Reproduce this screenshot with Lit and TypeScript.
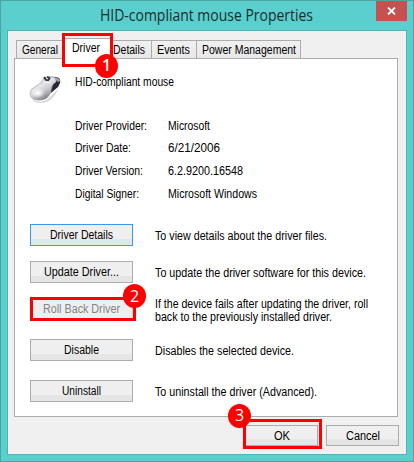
import { LitElement, html, css, svg } from "lit";
import { customElement, property } from "lit/decorators.js";

/** A single line of UI text fitted to an exact advance width. */
@customElement("ui-label")
class UiLabel extends LitElement {
  @property() text = "";
  @property({ type: Number }) width = 50;
  static styles = css`
    :host { display: block; height: 16px; flex: none; color: #000; }
    svg { display: block; overflow: visible; }
    text { font: 12px "Liberation Sans", Arial, sans-serif; fill: currentColor; }
  `;
  render() {
    return html`<svg width=${this.width} height="16">${svg`<text x="0" y="12" textLength=${this.width} lengthAdjust="spacingAndGlyphs">${this.text}</text>`}</svg>`;
  }
}

@customElement("app-root")
class AppRoot extends LitElement {
  static styles = css`
    :host { display: block; width: 414px; height: 462px; }
    * { box-sizing: border-box; }
    .window { width: 414px; height: 462px; border: 1px solid #4aa5a4; background: #5bcece; padding: 0 6px 6px; display: flex; flex-direction: column; font-family: "Liberation Sans", Arial, sans-serif; overflow: hidden; }
    .titlebar { height: 29px; flex: none; position: relative; }
    .title { display: block; overflow: visible; }
    .title text { font: 15.5px "Open Sans", "Noto Sans", sans-serif; fill: #17302f; }
    .close { position: absolute; right: 0; top: 0; width: 31px; height: 20px; background: #c75050; display: flex; align-items: center; justify-content: center; }
    .client { height: 425px; background: #f0f0f0; border: 1px solid #50b4b4; padding: 7px 7px 0 6px; display: flex; flex-direction: column; }
    .tabs { display: flex; align-items: flex-end; height: 21px; margin: 0 0 -1px 2px; flex: none; z-index: 1; }
    .tab { height: 19px; border: 1px solid #acacac; border-left: 0; background: linear-gradient(#f0f0f0, #e8e8e8); display: flex; padding-top: 1px; justify-content: center; }
    .tab.general { width: 47px; border-left: 1px solid #acacac; border-right: 0; padding-right: 1px; }
    .tab.active { width: 48px; height: 21px; background: #fff; border-left: 1px solid #acacac; border-bottom-color: #fff; position: relative; padding-right: 3px; }
    .tab.details { width: 41px; padding-right: 4px; }
    .tab.events { width: 45px; padding-right: 1px; }
    .tab.power { width: 104px; padding-left: 1px; }
    .page { height: 359px; width: 384px; flex: none; background: #fff; border: 1px solid #acacac; padding: 15px 0 0 15px; }
    .device { display: flex; gap: 11px; height: 44px; }
    .device svg { flex: none; overflow: visible; }
    .facts { display: grid; grid-template-columns: 93px auto; grid-template-rows: 22px 23px 23px 20px; margin-left: 45px; height: 106px; }
    .actions { display: grid; grid-template-columns: 103px auto; column-gap: 22px; grid-template-rows: 37px 37px 41px 41px 22px; }
    .btn { height: 22px; border: 1px solid #acacac; background: linear-gradient(#efefef 0 68%, #e5e5e5 72%); display: flex; justify-content: center; padding-top: 2px; position: relative; }
    .btn.focus { border-color: #3399ff; }
    .btn.off { border-color: #d9d9d9; background: #efefef; }
    .btn.off ui-label { color: #838383; }
    .desc { padding-top: 4px; }
    .desc.two { padding-top: 0; margin-top: -2px; }
    .desc.two ui-label + ui-label { margin-top: -3px; }
    .footer { display: flex; justify-content: flex-end; gap: 8px; padding-top: 8px; }
    .footer .btn { width: 73px; height: 21px; }
    .mark { position: absolute; border: 3px solid #fe0000; pointer-events: none; }
    .m1 { left: -2px; top: -6px; width: 51px; height: 34px; }
    .m2 { left: -1px; top: -2px; width: 106px; height: 24px; }
    .m3 { left: -3px; top: -7px; width: 79px; height: 30px; }
    .dot { position: absolute; width: 23px; height: 24px; border-radius: 50%; background: #fe0000; color: #fff; font: 16px/24px "Open Sans", "Noto Sans", sans-serif; text-align: center; }
    .m1 .dot { left: 30px; top: 18px; font-weight: 600; line-height: 23px; }
    .m2 .dot { left: 90px; top: -16px; }
    .m3 .dot { left: -18px; top: -18px; line-height: 23px; }
  `;

  private facts: [string, number, string, number][] = [
    ["Driver Provider:", 72, "Microsoft", 42],
    ["Driver Date:", 56, "6/21/2006", 52],
    ["Driver Version:", 68, "6.2.9200.16548", 75],
    ["Digital Signer:", 64, "Microsoft Windows", 89],
  ];

  private label(text: string, width: number) {
    return html`<ui-label .text=${text} .width=${width}></ui-label>`;
  }

  private mouse() {
    return html`<svg width="34" height="32" viewBox="0 0 34 32">
      <defs>
        <linearGradient id="body" x1="0.25" y1="0.1" x2="0.75" y2="0.9">
          <stop offset="0" stop-color="#b4b4b8" /><stop offset="0.35" stop-color="#e6e6e8" />
          <stop offset="0.6" stop-color="#cdcdd0" /><stop offset="1" stop-color="#77777b" />
        </linearGradient>
        <radialGradient id="shine"><stop offset="0" stop-color="#fff" /><stop offset="1" stop-color="#fff" stop-opacity="0" /></radialGradient>
      </defs>
      <path d="M2 25 Q11 31 19 24 L29 14 L25 21 Q18 30 10 29 Q4 29 2 25Z" fill="#bbb" opacity=".6" />
      <path d="M19 3 Q25 2 29 4 Q32 7 28 13 L21 19 Q20 13 23 9Z" fill="#24283d" />
      <path d="M22 3 Q28 3 30 6 Q30 8 28 8 Q26 5 21 5Z" fill="#a0a0a6" />
      <path d="M0 19 Q0 15 6 12 Q12 9 14 4 Q18 1 23 3 Q27 5 26 8 Q22 10 21.500 15 Q21 20 17 24 Q13 27 7 26 Q0 25 0 19Z" fill="url(#body)" stroke="#97979c" stroke-width=".5" />
      <ellipse cx="8" cy="19" rx="7" ry="5" fill="url(#shine)" />
      <path d="M14 3 L16 6 L18 6.500 L20 3.500 M17 3 L19 3.500" fill="none" stroke="#2c3045" stroke-width="1.800" />
      <path d="M13 8 Q18 7 21 9" fill="none" stroke="#fff" stroke-width="1.500" opacity=".6" />
    </svg>`;
  }

  render() {
    return html`<div class="window">
      <div class="titlebar">
        <svg class="title" width="400" height="29"><text x="93" y="20" textLength="213" lengthAdjust="spacingAndGlyphs">HID-compliant mouse Properties</text></svg>
        <div class="close"><svg width="9" height="8" viewBox="0 0 9 8"><path d="M1 .5 L8 7.5 M8 .5 L1 7.5" stroke="#fff" stroke-width="1.8" /></svg></div>
      </div>
      <div class="client">
        <div class="tabs">
          <div class="tab general">${this.label("General", 36)}</div>
          <div class="tab active">${this.label("Driver", 28)}<div class="mark m1"><span class="dot">1</span></div></div>
          <div class="tab details">${this.label("Details", 32)}</div>
          <div class="tab events">${this.label("Events", 33)}</div>
          <div class="tab power">${this.label("Power Management", 94)}</div>
        </div>
        <div class="page">
          <div class="device">${this.mouse()}${this.label("HID-compliant mouse", 99)}</div>
          <div class="facts">${this.facts.map(([k, kw, v, vw]) => html`${this.label(k, kw)}${this.label(v, vw)}`)}</div>
          <div class="actions">
            <div class="btn focus">${this.label("Driver Details", 63)}</div>
            <div class="desc">${this.label("To view details about the driver files.", 172)}</div>
            <div class="btn">${this.label("Update Driver...", 75)}</div>
            <div class="desc">${this.label("To update the driver software for this device.", 211)}</div>
            <div class="btn off">${this.label("Roll Back Driver", 77)}<div class="mark m2"><span class="dot">2</span></div></div>
            <div class="desc two">${this.label("If the device fails after updating the driver, roll", 213)}${this.label("back to the previously installed driver.", 177)}</div>
            <div class="btn">${this.label("Disable", 35)}</div>
            <div class="desc">${this.label("Disables the selected device.", 139)}</div>
            <div class="btn">${this.label("Uninstall", 39)}</div>
            <div class="desc">${this.label("To uninstall the driver (Advanced).", 162)}</div>
          </div>
        </div>
        <div class="footer">
          <div class="btn">${this.label("OK", 16)}<div class="mark m3"><span class="dot">3</span></div></div>
          <div class="btn">${this.label("Cancel", 34)}</div>
        </div>
      </div>
    </div>`;
  }
}
